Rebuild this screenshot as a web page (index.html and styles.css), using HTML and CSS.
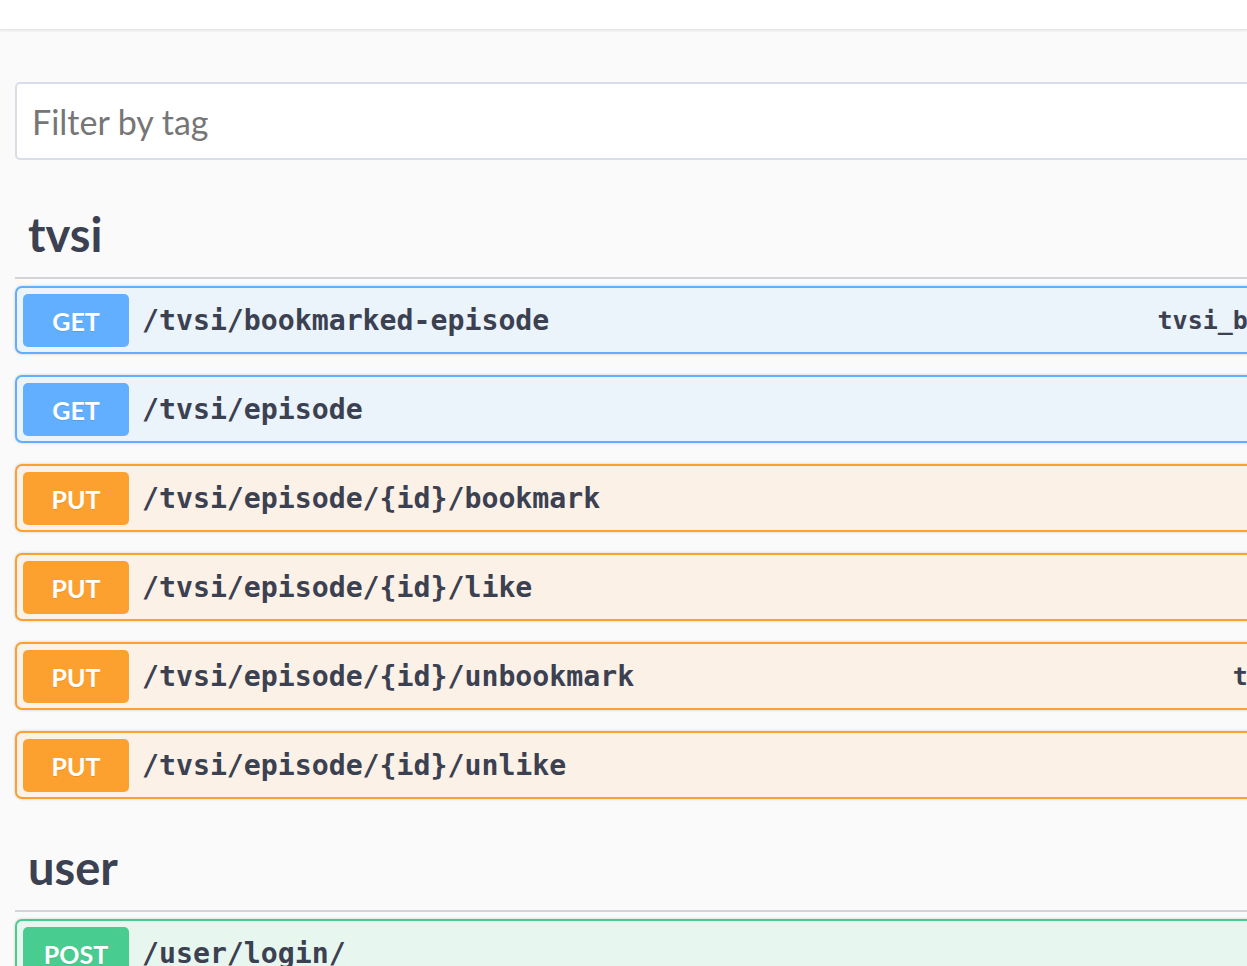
FILE: index.html
```html
<!DOCTYPE html>
<html lang="en">
<head>
<meta charset="utf-8">
<title>Swagger UI</title>
<link rel="stylesheet" href="styles.css">
</head>
<body>
<div class="topbar"></div>
<div class="wrapper">
  <div class="filter">
    <input class="filter-input" type="text" placeholder="Filter by tag">
  </div>

  <section class="tag-section">
    <h3 class="tag-heading">tvsi</h3>
    <div class="opblock opblock-get">
      <span class="method">GET</span>
      <span class="path">/tvsi/bookmarked-episode</span>
      <span class="op-id">tvsi_bookmarked_episode_list</span>
    </div>
    <div class="opblock opblock-get">
      <span class="method">GET</span>
      <span class="path">/tvsi/episode</span>
      <span class="op-id">tvsi_episode_list</span>
    </div>
    <div class="opblock opblock-put">
      <span class="method">PUT</span>
      <span class="path">/tvsi/episode/{id}/bookmark</span>
      <span class="op-id">tvsi_episode_bookmark</span>
    </div>
    <div class="opblock opblock-put">
      <span class="method">PUT</span>
      <span class="path">/tvsi/episode/{id}/like</span>
      <span class="op-id">tvsi_episode_like</span>
    </div>
    <div class="opblock opblock-put">
      <span class="method">PUT</span>
      <span class="path">/tvsi/episode/{id}/unbookmark</span>
      <span class="op-id">tvsi_episode_unbookmark</span>
    </div>
    <div class="opblock opblock-put">
      <span class="method">PUT</span>
      <span class="path">/tvsi/episode/{id}/unlike</span>
      <span class="op-id">tvsi_episode_unlike</span>
    </div>
  </section>

  <section class="tag-section">
    <h3 class="tag-heading">user</h3>
    <div class="opblock opblock-post">
      <span class="method">POST</span>
      <span class="path">/user/login/</span>
      <span class="op-id">user_login</span>
    </div>
  </section>
</div>
</body>
</html>
```

FILE: styles.css
```css
html, body {
  margin: 0;
  padding: 0;
  overflow: hidden;
}

body {
  background: #fafafa;
  color: #3b4151;
  font-family: "Lato", "Liberation Sans", sans-serif;
  width: 1247px;
  height: 966px;
}

.topbar {
  height: 29px;
  background: #ffffff;
  border-bottom: 1px solid #e6e6e6;
  box-shadow: 0 1px 2px rgba(0, 0, 0, 0.08);
}

.wrapper {
  width: 1590px;
  padding-left: 15px;
}

.filter {
  padding-top: 52px;
  margin-bottom: 32px;
}

.filter-input {
  display: block;
  box-sizing: border-box;
  width: 100%;
  height: 78px;
  margin: 0;
  padding: 0 15px;
  border: 2px solid #d8dde7;
  border-radius: 5px;
  background: #ffffff;
  font-family: "Lato", "Liberation Sans", sans-serif;
  font-size: 34px;
  color: #3b4151;
  outline: none;
}

.filter-input::placeholder {
  color: #767676;
  opacity: 1;
}

.tag-section {
  padding-bottom: 5px;
}

.tag-heading {
  margin: 0 0 7px 0;
  padding: 14px 20px 15px 13px;
  font-size: 47px;
  line-height: 56px;
  font-weight: 700;
  color: #3b4151;
  border-bottom: 2px solid #d3d4d7;
}

.opblock {
  box-sizing: border-box;
  height: 68px;
  display: flex;
  align-items: center;
  padding: 5px 24px 5px 6px;
  margin-bottom: 21px;
  border: 2px solid;
  border-radius: 7px;
  box-shadow: 0 0 3px rgba(0, 0, 0, 0.19);
}

.opblock-get {
  border-color: #61affe;
  background: #ebf3fb;
}

.opblock-put {
  border-color: #fca130;
  background: #fbf1e6;
}

.opblock-post {
  border-color: #49cc90;
  background: #e8f6f0;
}

.method {
  flex: 0 0 auto;
  width: 106px;
  height: 53px;
  display: flex;
  align-items: center;
  justify-content: center;
  padding-top: 1px;
  box-sizing: border-box;
  border-radius: 5px;
  color: #ffffff;
  font-family: "Lato", "Liberation Sans", sans-serif;
  font-size: 25px;
  font-weight: 700;
  text-shadow: 0 1px 0 rgba(0, 0, 0, 0.1);
}

.opblock-get .method { background: #61affe; }
.opblock-put .method { background: #fca130; }
.opblock-post .method { background: #49cc90; }

.path {
  flex: 1 1 auto;
  margin-left: 13px;
  font-family: "DejaVu Sans Mono", "Liberation Mono", monospace;
  font-size: 28.2px;
  font-weight: 700;
  color: #3b4151;
  white-space: nowrap;
}

.op-id {
  flex: 0 0 auto;
  font-family: "DejaVu Sans Mono", "Liberation Mono", monospace;
  font-size: 25px;
  font-weight: 700;
  color: #3b4151;
  white-space: nowrap;
}
```
